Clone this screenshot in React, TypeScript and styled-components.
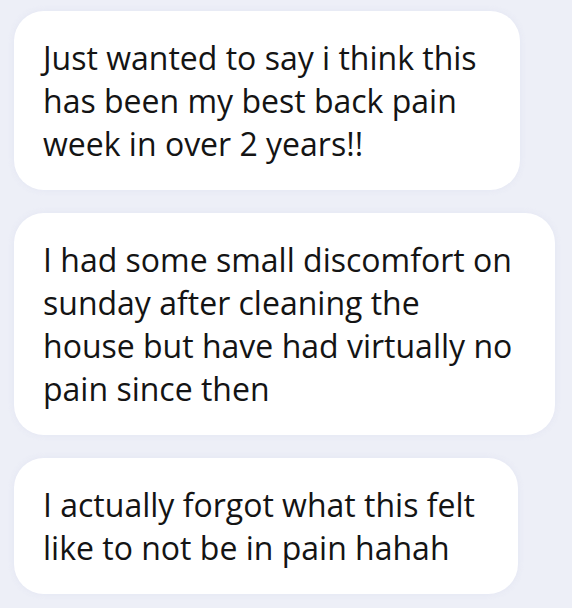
import React from "react";
import styled, { createGlobalStyle } from "styled-components";

const Global = createGlobalStyle`
  html, body {
    margin: 0;
    padding: 0;
    background: #edeff7;
  }
  body {
    font-family: "Open Sans", "Noto Sans", sans-serif;
  }
`;

const Thread = styled.div`
  display: flex;
  flex-direction: column;
  align-items: flex-start;
  gap: 23px;
  padding: 11px 0 0 14px;
  min-height: 608px;
  box-sizing: border-box;
`;

const Bubble = styled.div<{ $width: number }>`
  box-sizing: border-box;
  width: ${(p) => p.$width}px;
  background: #ffffff;
  border-radius: 30px;
  padding: 25px 40px 25px 29px;
  font-size: 32px;
  line-height: 43px;
  color: #141414;
  box-shadow: 0 0 6px rgba(220, 224, 240, 0.6);
`;

const messages = [
  { text: "Just wanted to say i think this has been my best back pain week in over 2 years!!", width: 506 },
  { text: "I had some small discomfort on sunday after cleaning the house but have had virtually no pain since then", width: 541 },
  { text: "I actually forgot what this felt like to not be in pain hahah", width: 504 },
];

export default function App() {
  return (
    <>
      <Global />
      <Thread>
        {messages.map((m) => (
          <Bubble key={m.text} $width={m.width}>
            {m.text}
          </Bubble>
        ))}
      </Thread>
    </>
  );
}
